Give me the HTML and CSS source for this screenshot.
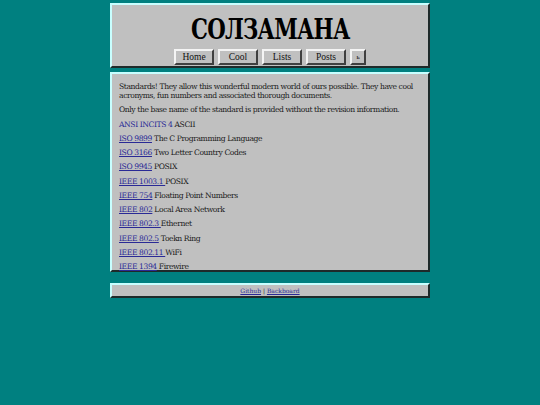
FILE: index.html
```html
<!DOCTYPE html>
<html>
<head>
<meta charset="utf-8">
<link rel="stylesheet" href="styles.css">
</head>
<body>
<header class="box header">
  <h1 class="title">СОЛЗАМАНА</h1>
  <nav class="nav">
    <a class="btn" href="#">Home</a>
    <a class="btn" href="#">Cool</a>
    <a class="btn" href="#">Lists</a>
    <a class="btn" href="#">Posts</a>
    <a class="btn small" href="#">ь</a>
  </nav>
</header>
<main class="box content">
  <p>Standards! They allow this wonderful modern world of ours possible. They have cool acronyms, fun numbers and associated thorough documents.</p>
  <p>Only the base name of the standard is provided without the revision information.</p>
  <p><a class="plain" href="#">ANSI INCITS 4</a> ASCII</p>
  <p><a href="#">ISO 9899</a> The C Programming Language</p>
  <p><a href="#">ISO 3166</a> Two Letter Country Codes</p>
  <p><a href="#">ISO 9945</a> POSIX</p>
  <p><a href="#">IEEE 1003.1 </a>POSIX</p>
  <p><a href="#">IEEE 754</a> Floating Point Numbers</p>
  <p><a href="#">IEEE 802</a> Local Area Network</p>
  <p><a href="#">IEEE 802.3 </a>Ethernet</p>
  <p><a href="#">IEEE 802.5</a> Toekn Ring</p>
  <p><a href="#">IEEE 802.11 </a>WiFi</p>
  <p><a href="#">IEEE 1394</a> Firewire</p>
</main>
<footer class="box footer">
  <a href="#">Github</a> | <a href="#">Backboard</a>
</footer>
</body>
</html>
```
FILE: styles.css
```css
html, body {
  margin: 0;
  padding: 0;
}
body {
  background: #008080;
  padding-top: 3px;
  font-family: "DejaVu Serif", "Liberation Serif", serif;
  color: #1a1a1a;
}
.box {
  width: 320px;
  box-sizing: border-box;
  margin: 0 auto;
  background: #c0c0c0;
  border: 2px solid;
  border-color: #c8ffff #1e2a2a #1e2a2a #c8ffff;
}
.header {
  height: 65px;
  display: flex;
  flex-direction: column;
  align-items: center;
}
.title {
  margin: 10px 0 0 0;
  font-family: "DejaVu Serif", serif;
  font-weight: bold;
  font-size: 28px;
  line-height: 30px;
  letter-spacing: -1px;
  transform: scaleX(0.76);
  color: #000;
}
.nav {
  margin-top: 4px;
  display: flex;
  gap: 4px;
}
.btn {
  display: block;
  box-sizing: border-box;
  width: 40px;
  height: 16px;
  background: #c0c0c0;
  border: 2px solid;
  border-color: #f4f4f4 #404040 #404040 #f4f4f4;
  font-family: "Liberation Serif", serif;
  font-size: 9.5px;
  line-height: 12px;
  text-align: center;
  color: #111;
  text-decoration: none;
}
.btn.small {
  width: 16px;
  font-size: 7px;
}
.content {
  margin-top: 4px;
  height: 200px;
  padding: 8px 7px 6px;
  font-size: 7.6px;
  line-height: 9px;
  letter-spacing: -0.4px;
}
.content p {
  margin: 0 0 5.25px 0;
}
.content a {
  color: #2a2a96;
}
.content a.plain {
  text-decoration: none;
}
.footer {
  margin-top: 11px;
  height: 15px;
  font-size: 6px;
  line-height: 11px;
  text-align: center;
  color: #222;
}
.footer a {
  color: #2a2a96;
}
```
